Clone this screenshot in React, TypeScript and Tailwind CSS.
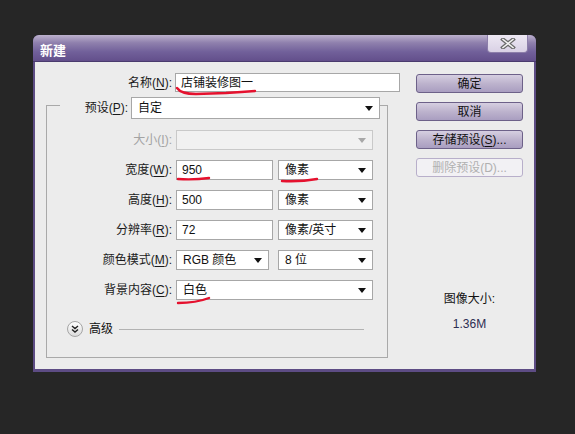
import type { ReactNode } from 'react'

const FONT = "font-['Liberation_Sans','Noto_Sans_CJK_SC',sans-serif]"

function Arrow({ disabled = false }: { disabled?: boolean }) {
  return (
    <svg width="8" height="5" viewBox="0 0 8 5" className="shrink-0">
      <path d="M0 0H8L4 5Z" fill={disabled ? '#a8a8a8' : '#111'} />
    </svg>
  )
}

function Label({ text, k, disabled = false }: { text: string; k: string; disabled?: boolean }) {
  return (
    <span className={disabled ? 'text-[#a3a3a3]' : 'text-[#1a1a1a]'}>
      {text}(<span className="underline underline-offset-2">{k}</span>):
    </span>
  )
}

function Input({ value, w }: { value: string; w: string }) {
  return (
    <div
      className={`${w} flex h-[20px] items-center border border-[#a7a7a7] bg-white pl-[5px] text-[12px] text-[#111]`}
    >
      {value}
    </div>
  )
}

function Select({
  value,
  w,
  h = 'h-[20px]',
  disabled = false,
}: {
  value: string
  w: string
  h?: string
  disabled?: boolean
}) {
  return (
    <div
      className={`${w} ${h} flex items-center justify-between border pr-[6px] pl-[6px] text-[12px] ${
        disabled
          ? 'border-[#c9c9c9] bg-[#f1f1f1]'
          : 'border-[#a7a7a7] bg-white text-[#111]'
      }`}
    >
      <span>{value}</span>
      <Arrow disabled={disabled} />
    </div>
  )
}

function Row({
  label,
  children,
  className = '',
  gap = 'gap-[5px]',
}: {
  label: ReactNode
  children: ReactNode
  className?: string
  gap?: string
}) {
  return (
    <div className={`flex h-[20px] items-center ${className}`}>
      <div className="w-[125px] text-right text-[12px]">{label}</div>
      <div className={`ml-[4px] flex ${gap}`}>{children}</div>
    </div>
  )
}

function Button({ children, disabled = false }: { children: ReactNode; disabled?: boolean }) {
  return (
    <div
      className={`flex h-[19px] w-[107px] items-center justify-center rounded-[3px] border text-[12px] ${
        disabled
          ? 'border-[#b8afca] bg-[#f2f1f4] text-[#b0b0b0]'
          : 'border-[#6d6189] bg-[linear-gradient(to_bottom,#d6cfe1_0%,#bdb3cd_50%,#a99ec0_100%)] text-[#111]'
      }`}
    >
      {children}
    </div>
  )
}

export default function App() {
  return (
    <div className={`relative min-h-[434px] bg-[#262626] pt-[35px] pl-[33px] ${FONT}`}>
      <div className="flex h-[337px] w-[503px] flex-col rounded-t-[6px] bg-[#5d4c84] px-[2px] pb-[3px]">
        {/* title bar */}
        <div className="-mx-[2px] flex h-[27px] items-start justify-between rounded-t-[6px] border-b border-[#4a3b6e] bg-[linear-gradient(to_bottom,#bcb1cd_0%,#8f80ad_30%,#71609a_65%,#634f8b_100%)]">
          <span className="mt-[6px] ml-[7px] text-[13px] font-bold text-white">新建</span>
          <div className="mr-[8px] flex h-[18px] w-[41px] items-center justify-center rounded-b-[4px] border border-t-0 border-[#8c7eaa] bg-[linear-gradient(to_bottom,#ede8f3,#d9d1e5)]">
            <svg width="16" height="11" viewBox="0 0 16 11">
              <path d="M3 1.5L13 9.5M13 1.5L3 9.5" stroke="#6a6a6a" strokeWidth="4" strokeLinecap="square" />
              <path d="M3 1.5L13 9.5M13 1.5L3 9.5" stroke="#f4f4f4" strokeWidth="1.6" strokeLinecap="square" />
            </svg>
          </div>
        </div>

        {/* client */}
        <div className="flex flex-1 bg-[#ececec]">
          <div className="w-[365px]">
            <div className="mt-[11px] flex h-[19px] items-center">
              <div className="w-[137px] text-right text-[12px]">
                <Label text="名称" k="N" />
              </div>
              <div className="ml-[3px] flex h-[19px] w-[225px] items-center border border-[#a7a7a7] bg-white pl-[5px] text-[12px] text-[#111]">
                店铺装修图一
              </div>
            </div>

            <div className="mt-[13px] ml-[11px] box-border h-[253px] w-[342px] border border-[#a9a9a9]">
              <div className="-mt-[9px] flex h-[22px] items-stretch">
                <div className="w-[13px]" />
                <div className="flex w-[71px] items-center justify-end bg-[#ececec] pr-[3px] text-[12px]">
                  <Label text="预设" k="P" />
                </div>
                <Select value="自定" w="w-[249px]" h="h-[22px]" />
              </div>

              <Row className="mt-[11px]" label={<Label text="大小" k="I" disabled />}>
                <Select value="" w="w-[197px]" disabled />
              </Row>
              <Row className="mt-[10px]" label={<Label text="宽度" k="W" />}>
                <Input value="950" w="w-[97px]" />
                <Select value="像素" w="w-[95px]" />
              </Row>
              <Row className="mt-[10px]" label={<Label text="高度" k="H" />}>
                <Input value="500" w="w-[97px]" />
                <Select value="像素" w="w-[95px]" />
              </Row>
              <Row className="mt-[10px]" label={<Label text="分辨率" k="R" />}>
                <Input value="72" w="w-[97px]" />
                <Select value="像素/英寸" w="w-[95px]" />
              </Row>
              <Row className="mt-[10px]" gap="gap-[9px]" label={<Label text="颜色模式" k="M" />}>
                <Select value="RGB 颜色" w="w-[93px]" />
                <Select value="8 位" w="w-[95px]" />
              </Row>
              <Row className="mt-[10px]" label={<Label text="背景内容" k="C" />}>
                <Select value="白色" w="w-[197px]" />
              </Row>

              <div className="mt-[20px] ml-[20px] flex items-center">
                <div className="flex h-[16px] w-[16px] items-center justify-center rounded-full border border-[#a5a5a5] bg-[linear-gradient(to_bottom,#ffffff,#dcdcdc)]">
                  <svg width="8" height="8" viewBox="0 0 8 8">
                    <path d="M1 1L4 3.5L7 1M1 4.5L4 7L7 4.5" stroke="#222" strokeWidth="1.4" fill="none" />
                  </svg>
                </div>
                <span className="ml-[6px] text-[12px] text-[#111]">高级</span>
                <div className="ml-[6px] h-px w-[245px] bg-[#b2b2b2]" />
              </div>
            </div>
          </div>

          <div className="mt-[12px] ml-[16px] flex w-[107px] flex-col">
            <div className="flex flex-col gap-[9px]">
              <Button>确定</Button>
              <Button>取消</Button>
              <Button>
                <span>
                  存储预设(<span className="underline underline-offset-2">S</span>)...
                </span>
              </Button>
              <Button disabled>删除预设(D)...</Button>
            </div>
            <div className="mt-[114px] text-center text-[12px] leading-[16px] text-[#111]">图像大小:</div>
            <div className="mt-[9px] text-center text-[12px] leading-[16px] text-[#2d2d52]">1.36M</div>
          </div>
        </div>
      </div>

      {/* red annotation strokes */}
      <svg className="pointer-events-none absolute inset-0" width="575" height="434">
        <g stroke="#e5112e" strokeWidth="2.4" fill="none" strokeLinecap="round">
          <path d="M177 88 Q181 94 196 94 L226 93 Q242 92 255 91" />
          <path d="M178 179 Q194 180 209 178" />
          <path d="M282 181 Q300 182 317 179" />
          <path d="M178 303 Q196 303 209 298" />
        </g>
      </svg>
    </div>
  )
}
